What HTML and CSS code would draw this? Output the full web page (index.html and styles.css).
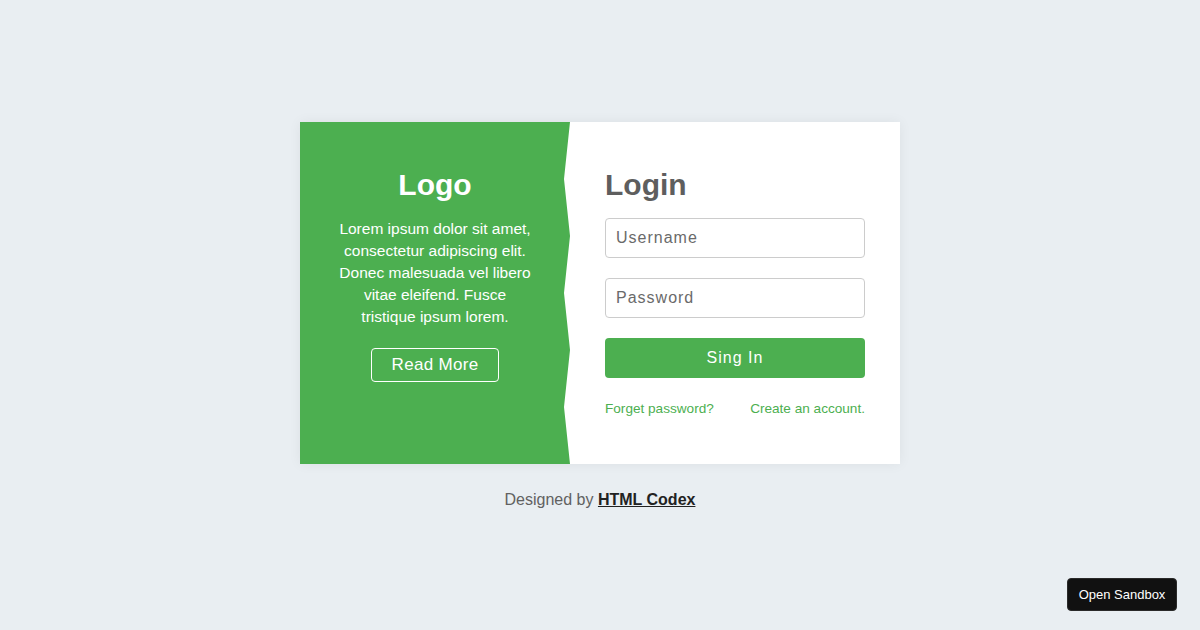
FILE: index.html
```html
<!DOCTYPE html>
<html lang="en">
<head>
<meta charset="utf-8">
<title>Login</title>
<link rel="stylesheet" href="styles.css">
</head>
<body>
<main class="page">
  <div class="card">
    <section class="brand">
      <h1 class="brand-title">Logo</h1>
      <p class="brand-text">Lorem ipsum dolor sit amet, consectetur adipiscing elit. Donec malesuada vel libero vitae eleifend. Fusce tristique ipsum lorem.</p>
      <a class="btn-outline" href="#">Read More</a>
    </section>
    <section class="login">
      <h2 class="login-title">Login</h2>
      <form class="login-form">
        <input class="field" type="text" placeholder="Username">
        <input class="field" type="password" placeholder="Password">
        <button class="btn-primary" type="button">Sing In</button>
      </form>
      <div class="links">
        <a href="#">Forget password?</a>
        <a href="#">Create an account.</a>
      </div>
    </section>
  </div>
  <p class="credit">Designed by <a href="#">HTML Codex</a></p>
</main>
<a class="sandbox" href="#">Open Sandbox</a>
</body>
</html>
```

FILE: styles.css
```css
* { box-sizing: border-box; }
html, body { margin: 0; padding: 0; }
body {
  background: #e9eef2;
  font-family: "Liberation Sans", Arial, sans-serif;
  color: #555;
}
.page {
  min-height: 100vh;
  padding-top: 3px;
  display: flex;
  flex-direction: column;
  align-items: center;
  justify-content: center;
}
.card {
  width: 600px;
  height: 342px;
  display: flex;
  background: #fff;
  box-shadow: 0 0 12px rgba(0, 0, 0, 0.06);
}
.brand {
  width: 270px;
  flex: none;
  background: #4caf50;
  color: #fff;
  text-align: center;
  padding: 45px 35px 0;
  display: flex;
  flex-direction: column;
  align-items: center;
  clip-path: polygon(0 0, 270px 0, 264px 57px, 270px 114px, 264px 171px, 270px 228px, 264px 285px, 270px 342px, 0 342px);
}
.brand-title {
  margin: 0;
  font-size: 30px;
  line-height: 36px;
  font-weight: 700;
}
.brand-text {
  margin: 15px 0 0;
  font-size: 15.5px;
  line-height: 22px;
}
.btn-outline {
  margin-top: 20px;
  display: inline-block;
  padding: 6px 20px;
  border: 1px solid #fff;
  border-radius: 4px;
  color: #fff;
  text-decoration: none;
  font-size: 17px;
  line-height: 20px;
  letter-spacing: 0.3px;
}
.login {
  flex: 1;
  padding: 45px 35px 0;
}
.login-title {
  margin: 0;
  font-size: 30px;
  line-height: 36px;
  font-weight: 700;
  color: #5e5e5e;
}
.login-form {
  margin-top: 15px;
  display: flex;
  flex-direction: column;
  gap: 20px;
}
.field {
  width: 260px;
  height: 40px;
  border: 1px solid #ccc;
  border-radius: 4px;
  padding: 0 10px;
  font-family: inherit;
  font-size: 16px;
  letter-spacing: 1px;
  color: #555;
  background: #fff;
  outline: none;
}
.field::placeholder { color: #6a6a6a; }
.btn-primary {
  width: 260px;
  height: 40px;
  border: 0;
  border-radius: 4px;
  background: #4caf50;
  color: #fff;
  font-family: inherit;
  font-size: 16px;
  letter-spacing: 1px;
  cursor: pointer;
}
.links {
  margin-top: 22px;
  width: 260px;
  display: flex;
  justify-content: space-between;
  font-size: 13.6px;
  line-height: 18px;
}
.links a {
  color: #4caf50;
  text-decoration: none;
}
.credit {
  margin: 25px 0 0;
  font-size: 16px;
  line-height: 22px;
  color: #616161;
}
.credit a {
  color: #222;
  font-weight: 700;
}
.sandbox {
  position: fixed;
  right: 23px;
  bottom: 19px;
  width: 110px;
  height: 33px;
  display: flex;
  align-items: center;
  justify-content: center;
  background: #111;
  border: 1px solid #2a2a2a;
  border-radius: 4px;
  color: #fff;
  font-size: 13px;
  text-decoration: none;
}
```
